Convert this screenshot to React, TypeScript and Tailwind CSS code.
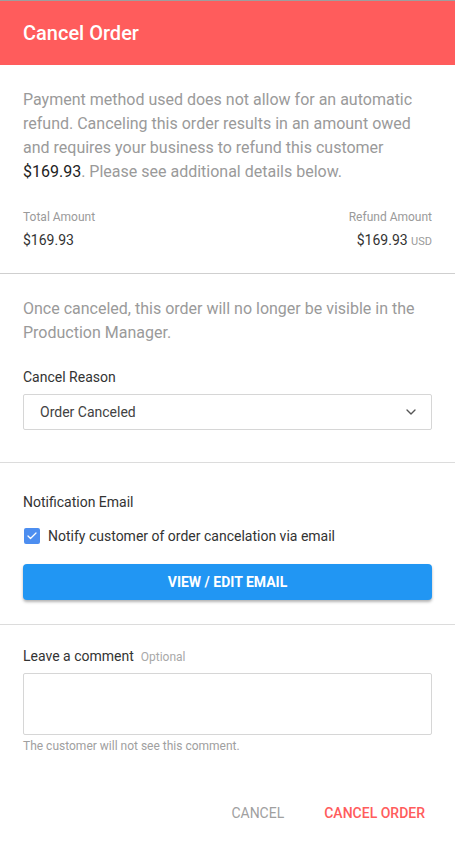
import { ChevronDown, Check } from 'lucide-react'

const App = () => {
  return (
    <div className="w-[455px] min-h-[842px] bg-white border-t border-[#9e9e9e] font-['Roboto',_'Liberation_Sans',_sans-serif]">
      {/* Header */}
      <div className="h-[64px] bg-[#ff5c5c] flex items-center px-[23px]">
        <h1 className="text-[20px] font-medium text-white">Cancel Order</h1>
      </div>

      {/* Refund info */}
      <div className="px-[23px] pt-[23px] pb-[21px] border-b border-[#cfcfcf]">
        <p className="text-[16px] leading-[24px] text-[#9a9a9a]">
          Payment method used does not allow for an automatic refund. Canceling this order results in an amount owed
          and requires your business to refund this customer{' '}
          <span className="text-[#222]">$169.93</span>. Please see additional details below.
        </p>
        <div className="flex justify-between mt-[25px]">
          <div>
            <div className="text-[12px] leading-[16px] text-[#9a9a9a]">Total Amount</div>
            <div className="text-[14px] leading-[20px] text-[#333] mt-[5px]">$169.93</div>
          </div>
          <div className="text-right">
            <div className="text-[12px] leading-[16px] text-[#9a9a9a]">Refund Amount</div>
            <div className="text-[14px] leading-[20px] text-[#333] mt-[5px]">
              $169.93 <span className="text-[11px] text-[#9a9a9a]">USD</span>
            </div>
          </div>
        </div>
      </div>

      {/* Cancel reason */}
      <div className="px-[23px] pt-[23px] pb-[32px] border-b border-[#dcdcdc]">
        <p className="text-[16px] leading-[24px] text-[#9a9a9a]">
          Once canceled, this order will no longer be visible in the Production Manager.
        </p>
        <div className="text-[14px] leading-[20px] text-[#333] mt-[22px]">Cancel Reason</div>
        <div className="mt-[7px] h-[36px] border border-[#d6d6d6] rounded-[2px] flex items-center justify-between pl-[16px] pr-[12px]">
          <span className="text-[14px] text-[#424242]">Order Canceled</span>
          <ChevronDown className="h-4 w-4 text-[#555]" strokeWidth={2} />
        </div>
      </div>

      {/* Notification */}
      <div className="px-[23px] pt-[29px] pb-[24px] border-b border-[#dcdcdc]">
        <div className="text-[14px] leading-[20px] text-[#333]">Notification Email</div>
        <div className="flex items-center gap-[8px] mt-[14px]">
          <div className="w-[16px] h-[16px] rounded-[2px] bg-[#4d8ef0] flex items-center justify-center ml-[1px]">
            <Check className="h-[12px] w-[12px] text-white" strokeWidth={2.5} />
          </div>
          <span className="text-[14px] leading-[20px] text-[#333]">Notify customer of order cancelation via email</span>
        </div>
        <button className="mt-[18px] w-full h-[36px] rounded-[4px] bg-[#2196f3] text-white text-[14px] font-bold uppercase shadow-[0_2px_3px_rgba(0,0,0,0.3)]">
          View / Edit Email
        </button>
      </div>

      {/* Comment */}
      <div className="px-[23px] pt-[21px]">
        <div className="flex items-baseline gap-[7px]">
          <span className="text-[14px] leading-[20px] text-[#333]">Leave a comment</span>
          <span className="text-[12px] text-[#a8a8a8]">Optional</span>
        </div>
        <textarea className="mt-[7px] block w-full h-[62px] border border-[#d6d6d6] rounded-[2px] resize-none outline-none" />
        <div className="mt-[3px] text-[12px] leading-[16px] text-[#a0a0a0]">The customer will not see this comment.</div>
      </div>

      {/* Footer */}
      <div className="flex justify-end items-center gap-[24px] px-[22px] mt-[41px]">
        <button className="h-[36px] px-[8px] text-[14px] text-[#a0a0a0] uppercase">Cancel</button>
        <button className="h-[36px] px-[8px] text-[14px] font-medium text-[#ff5c5c] uppercase">Cancel Order</button>
      </div>
    </div>
  )
}

export default App
